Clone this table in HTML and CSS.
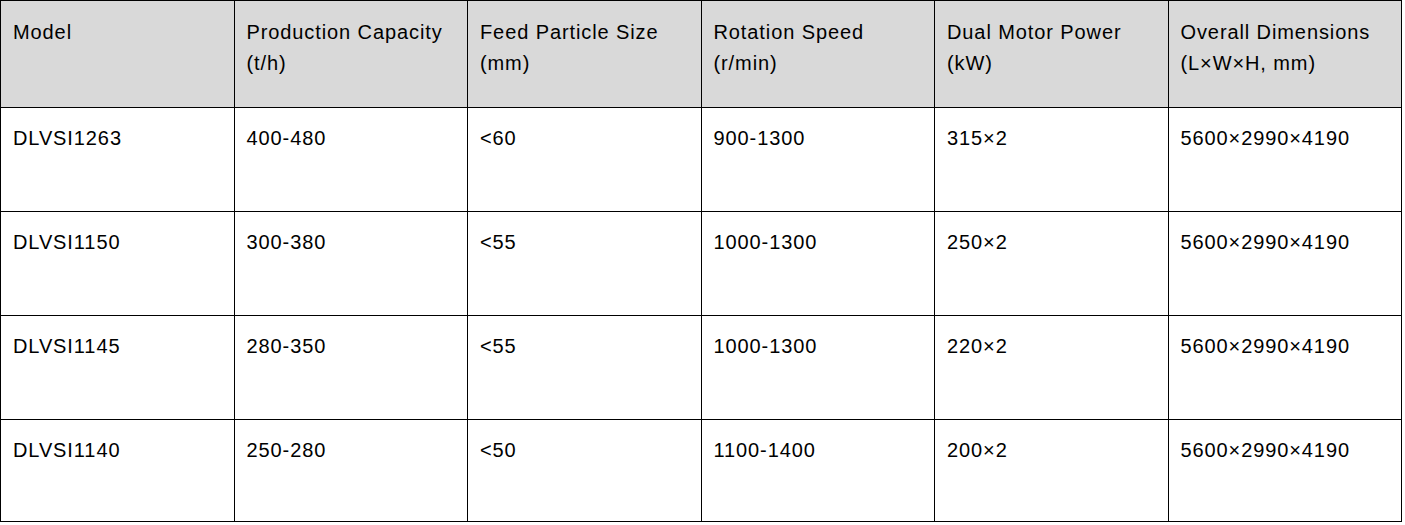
FILE: index.html
```html
<!DOCTYPE html>
<html lang="en">
<head>
<meta charset="utf-8">
<title>DLVSI Specifications</title>
<link rel="stylesheet" href="styles.css">
</head>
<body>
<table class="spec">
  <thead>
    <tr class="head-row">
      <th>Model</th>
      <th>Production Capacity<br>(t/h)</th>
      <th>Feed Particle Size<br>(mm)</th>
      <th>Rotation Speed<br>(r/min)</th>
      <th>Dual Motor Power<br>(kW)</th>
      <th>Overall Dimensions<br>(L×W×H, mm)</th>
    </tr>
  </thead>
  <tbody>
    <tr class="row">
      <td>DLVSI1263</td><td>400-480</td><td>&lt;60</td><td>900-1300</td><td>315×2</td><td>5600×2990×4190</td>
    </tr>
    <tr class="row">
      <td>DLVSI1150</td><td>300-380</td><td>&lt;55</td><td>1000-1300</td><td>250×2</td><td>5600×2990×4190</td>
    </tr>
    <tr class="row">
      <td>DLVSI1145</td><td>280-350</td><td>&lt;55</td><td>1000-1300</td><td>220×2</td><td>5600×2990×4190</td>
    </tr>
    <tr class="row row-last">
      <td>DLVSI1140</td><td>250-280</td><td>&lt;50</td><td>1100-1400</td><td>200×2</td><td>5600×2990×4190</td>
    </tr>
  </tbody>
</table>
</body>
</html>
```

FILE: styles.css
```css
html, body {
  margin: 0;
  padding: 0;
  background: #ffffff;
}

.spec {
  width: 1402px;
  border-collapse: collapse;
  table-layout: fixed;
  font-family: "Liberation Sans", Arial, sans-serif;
  font-size: 20px;
  line-height: 31px;
  letter-spacing: 0.9px;
  color: #000000;
}

.spec th,
.spec td {
  border: 1px solid #000000;
  padding: 15px 12px 0 12px;
  vertical-align: top;
  text-align: left;
  font-weight: normal;
}

.spec th {
  padding-top: 16px;
}

.head-row {
  height: 107px;
  background: #d9d9d9;
}

.row {
  height: 104px;
}

.row-last {
  height: 102px;
}
```
